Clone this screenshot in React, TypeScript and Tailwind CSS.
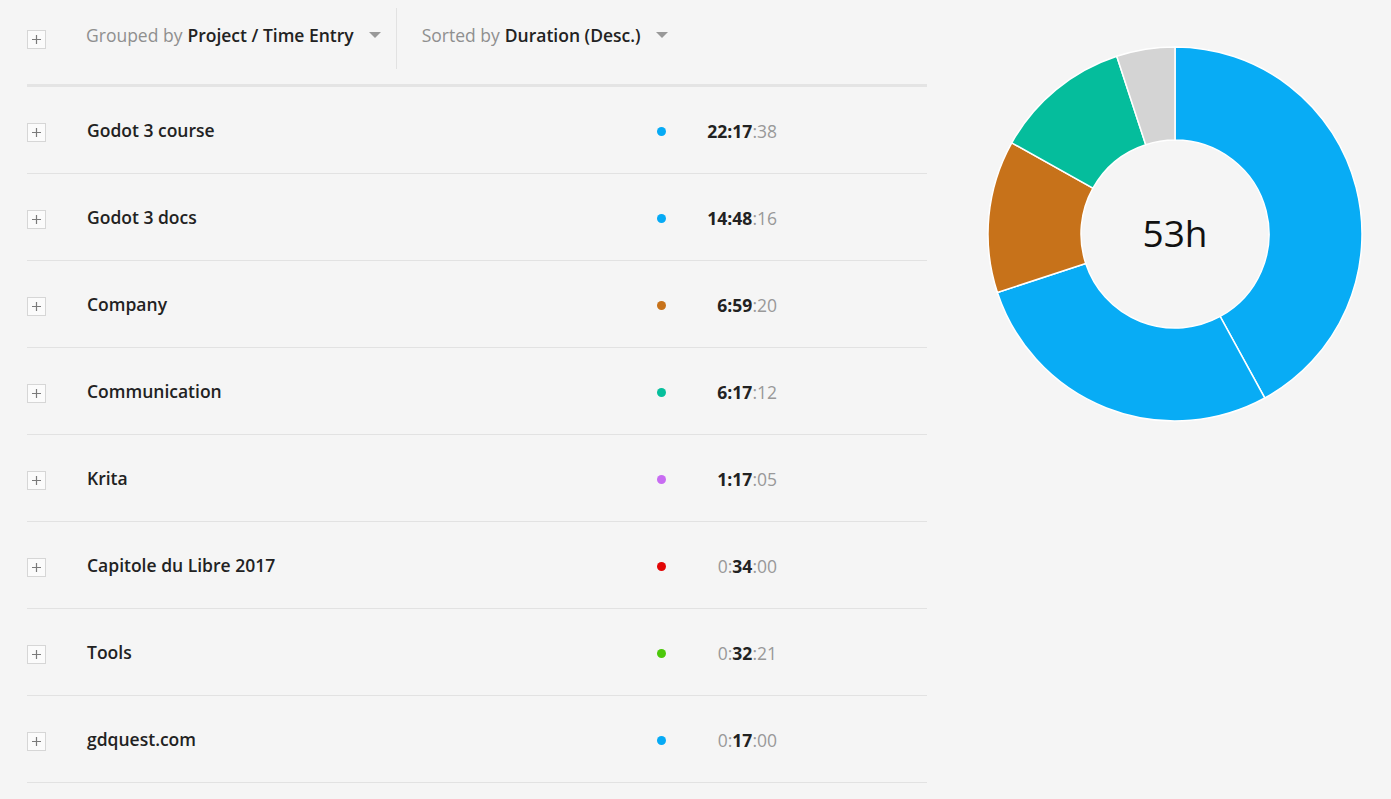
import React from 'react'

type Row = {
  name: string
  color: string
  parts: [string, string, string]
  bold: [boolean, boolean, boolean]
}

const rows: Row[] = [
  { name: 'Godot 3 course', color: '#06aaf5', parts: ['22', '17', '38'], bold: [true, true, false] },
  { name: 'Godot 3 docs', color: '#06aaf5', parts: ['14', '48', '16'], bold: [true, true, false] },
  { name: 'Company', color: '#c7721a', parts: ['6', '59', '20'], bold: [true, true, false] },
  { name: 'Communication', color: '#06bf9c', parts: ['6', '17', '12'], bold: [true, true, false] },
  { name: 'Krita', color: '#c86cf2', parts: ['1', '17', '05'], bold: [true, true, false] },
  { name: 'Capitole du Libre 2017', color: '#e20606', parts: ['0', '34', '00'], bold: [false, true, false] },
  { name: 'Tools', color: '#4cc80a', parts: ['0', '32', '21'], bold: [false, true, false] },
  { name: 'gdquest.com', color: '#06aaf5', parts: ['0', '17', '00'], bold: [false, true, false] },
]

const slices = [
  { value: 22.294, color: '#08acf5' },
  { value: 14.804, color: '#08acf5' },
  { value: 6.989, color: '#c7721a' },
  { value: 6.287, color: '#05bd9c' },
  { value: 2.674, color: '#d4d4d4' },
]

function PlusBox() {
  return (
    <div className="w-[19px] h-[19px] shrink-0 border border-[#d6d6d6] bg-[#fbfbfb] flex items-center justify-center">
      <svg width="11" height="11" viewBox="0 0 11 11">
        <path d="M5.5 1v9M1 5.5h9" stroke="#7a7a7a" strokeWidth="1.2" />
      </svg>
    </div>
  )
}

function Caret() {
  return (
    <svg width="12" height="7" viewBox="0 0 12 7" className="ml-[15px]">
      <path d="M0 0h12L6 6z" fill="#999" />
    </svg>
  )
}

function Donut() {
  const cx = 188
  const cy = 188
  const R = 187
  const r = 94
  const total = slices.reduce((s, x) => s + x.value, 0)
  let acc = 0
  const pt = (a: number, rad: number) => [cx + rad * Math.sin(a), cy - rad * Math.cos(a)]
  return (
    <svg width="376" height="376" viewBox="0 0 376 376">
      {slices.map((s, i) => {
        const a0 = (acc / total) * Math.PI * 2
        acc += s.value
        const a1 = (acc / total) * Math.PI * 2
        const large = a1 - a0 > Math.PI ? 1 : 0
        const [x0, y0] = pt(a0, R)
        const [x1, y1] = pt(a1, R)
        const [x2, y2] = pt(a1, r)
        const [x3, y3] = pt(a0, r)
        const d = `M${x0} ${y0} A${R} ${R} 0 ${large} 1 ${x1} ${y1} L${x2} ${y2} A${r} ${r} 0 ${large} 0 ${x3} ${y3} Z`
        return <path key={i} d={d} fill={s.color} stroke="#ffffff" strokeWidth="1.5" />
      })}
      <text
        x={cx}
        y={cy + 13}
        textAnchor="middle"
        fontSize="37"
        fill="#111"
        fontFamily="'Open Sans', sans-serif"
      >
        53h
      </text>
    </svg>
  )
}

export default function App() {
  return (
    <div className="w-[1391px] h-[799px] overflow-hidden bg-[#f5f5f5] flex font-['Open_Sans',sans-serif]">
      <div className="pl-[27px] w-[927px] shrink-0">
        <div className="h-[87px] border-b-[3px] border-[#e4e4e4] flex">
          <div className="pt-[30px]">
            <PlusBox />
          </div>
          <div className="ml-[40px] h-[61px] mt-[8px] flex items-center pb-[6px] border-r border-[#e2e2e2] pr-[15px] text-[17.5px]">
            <span className="text-[#8f8f8f]">Grouped by</span>
            <span className="ml-[5px] font-semibold text-[#222]">Project / Time Entry</span>
            <Caret />
          </div>
          <div className="ml-[25px] h-[61px] mt-[8px] flex items-center pb-[6px] text-[17.5px]">
            <span className="text-[#8f8f8f]">Sorted by</span>
            <span className="ml-[5px] font-semibold text-[#222]">Duration (Desc.)</span>
            <Caret />
          </div>
        </div>
        {rows.map((row) => (
          <div key={row.name} className="h-[87px] border-b border-[#e2e2e2] flex items-center">
            <div className="pt-[4px]">
              <PlusBox />
            </div>
            <div className="ml-[41px] flex-1 text-[17.5px] font-semibold text-[#222]">{row.name}</div>
            <div className="w-[9px] h-[9px] rounded-full mt-[2px]" style={{ backgroundColor: row.color }} />
            <div className="w-[111px] text-right text-[17.5px] text-[#999] pt-[2px]">
              {row.parts.map((p, i) => (
                <React.Fragment key={i}>
                  {i > 0 && (
                    <span className={row.bold[i] && row.bold[i - 1] ? 'font-bold text-[#222]' : ''}>:</span>
                  )}
                  <span className={row.bold[i] ? 'font-bold text-[#222]' : ''}>{p}</span>
                </React.Fragment>
              ))}
            </div>
            <div className="w-[150px]" />
          </div>
        ))}
      </div>
      <div className="pl-[60px] pt-[46px]">
        <Donut />
      </div>
    </div>
  )
}
